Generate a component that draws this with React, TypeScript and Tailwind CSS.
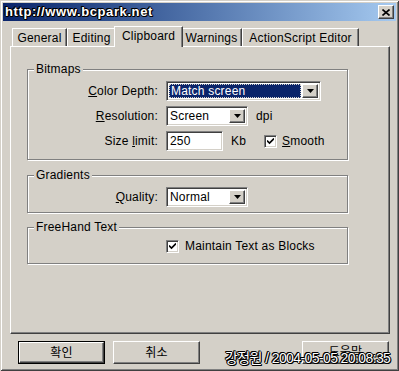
import React from 'react';

const font = "font-['Liberation_Sans','Noto_Sans_CJK_KR',sans-serif]";
const raised =
  'border border-t-white border-l-white border-b-[#404040] border-r-[#404040] shadow-[inset_-1px_-1px_0_#808080]';
const sunken =
  'border border-t-[#808080] border-l-[#808080] border-b-white border-r-white shadow-[inset_1px_1px_0_#404040,inset_-1px_-1px_0_#d4d0c8]';
const outline = '[text-shadow:1px_0_#000,-1px_0_#000,0_1px_#000,0_-1px_#000,1px_1px_#000,-1px_-1px_#000]';

const Arrow: React.FC = () => (
  <div className={`flex h-full w-[16px] shrink-0 items-center justify-center bg-[#d4d0c8] ${raised}`}>
    <svg width="7" height="4" viewBox="0 0 7 4">
      <path d="M0 0h7L3.5 4z" fill="#000" />
    </svg>
  </div>
);

const Combo: React.FC<{ value: string; width: string; focused?: boolean }> = ({ value, width, focused }) => (
  <div className={`flex h-[20px] items-stretch bg-white p-[2px] ${sunken} ${width}`}>
    <div className="flex flex-1 items-center pr-[1px]">
      {focused ? (
        <span className="flex h-full flex-1 items-center border border-dotted border-[#d4d0c8] bg-[#0a246a] pl-[1px] text-white">
          {value}
        </span>
      ) : (
        <span className="pl-[1px]">{value}</span>
      )}
    </div>
    <Arrow />
  </div>
);

const Check: React.FC = () => (
  <div className={`flex h-[13px] w-[13px] shrink-0 items-center justify-center bg-white ${sunken}`}>
    <svg width="7" height="7" viewBox="0 0 7 7">
      <path d="M0 2.5l2.5 2.5L7 0.5" stroke="#000" strokeWidth="1.6" fill="none" />
    </svg>
  </div>
);

const Label: React.FC<{ children: React.ReactNode }> = ({ children }) => (
  <span className="mr-[8px] w-[130px] shrink-0 text-right">{children}</span>
);

const Group: React.FC<{ title: string; className?: string; children: React.ReactNode }> = ({ title, className, children }) => (
  <fieldset
    className={`w-[321px] border border-[#808080] shadow-[inset_1px_1px_0_#fff,1px_1px_0_#fff] ${className ?? ''}`}
  >
    <legend className="ml-[6px] bg-[#d4d0c8] px-[2px] leading-[14px]">{title}</legend>
    {children}
  </fieldset>
);

const tabs = [
  { name: 'General', w: 'w-[55px]' },
  { name: 'Editing', w: 'w-[49px]' },
  { name: 'Clipboard', w: 'w-[69px]', active: true },
  { name: 'Warnings', w: 'w-[61px]' },
  { name: 'ActionScript Editor', w: 'w-[117px]' },
];

export default function App() {
  return (
    <div
      className={`relative h-[371px] w-[399px] bg-[#d4d0c8] p-[3px] text-[12px] tracking-[0.2px] text-black ${font} shadow-[inset_1px_1px_0_#d4d0c8,inset_-1px_-1px_0_#404040,inset_2px_2px_0_#fff,inset_-2px_-2px_0_#808080]`}
    >
      {/* title bar */}
      <div className="flex h-[18px] items-center justify-between bg-gradient-to-r from-[#0a246a] to-[#a6caf0] pl-[2px] pr-[2px]">
        <span className={`text-[13px] font-bold tracking-[0.6px] text-white ${outline}`}>http://www.bcpark.net</span>
        <div className={`flex h-[14px] w-[16px] items-center justify-center bg-[#d4d0c8] ${raised}`}>
          <svg width="8" height="7" viewBox="0 0 8 7">
            <path d="M0.5 0.5l7 6M7.5 0.5l-7 6" stroke="#000" strokeWidth="1.6" />
          </svg>
        </div>
      </div>

      <div className="px-[7px]">
        {/* tabs */}
        <div className="mt-[5px] flex h-[20px] items-end pl-[2px]">
          {tabs.map((t) =>
            t.active ? (
              <div
                key={t.name}
                className={`relative z-10 mx-[-2px] mb-[-1px] flex h-[21px] items-center justify-center border-l border-t border-r border-l-white border-t-white border-r-[#404040] bg-[#d4d0c8] pb-[3px] shadow-[inset_-1px_0_0_#808080] ${t.w}`}
              >
                {t.name}
              </div>
            ) : (
              <div
                key={t.name}
                className={`flex h-[18px] items-center justify-center border-l border-t border-r border-l-white border-t-white border-r-[#404040] shadow-[inset_-1px_0_0_#808080] ${t.w}`}
              >
                {t.name}
              </div>
            )
          )}
        </div>

        {/* panel */}
        <div className={`h-[288px] w-[380px] pl-[16px] pt-[15px] ${raised}`}>
          <Group title="Bitmaps" className="pb-[8px]">
            <div className="flex flex-col gap-[5px] pt-[5px]">
              <div className="flex h-[20px] items-center">
                <Label>
                  <u>C</u>olor Depth:
                </Label>
                <Combo value="Match screen" width="w-[155px]" focused />
              </div>
              <div className="flex h-[20px] items-center">
                <Label>
                  <u>R</u>esolution:
                </Label>
                <Combo value="Screen" width="w-[82px]" />
                <span className="ml-[8px]">dpi</span>
              </div>
              <div className="flex h-[20px] items-center">
                <Label>
                  Size <u>l</u>imit:
                </Label>
                <div className={`flex h-[20px] w-[57px] items-center bg-white pl-[3px] ${sunken}`}>250</div>
                <span className="ml-[8px]">Kb</span>
                <div className="ml-[18px] flex items-center gap-[5px]">
                  <Check />
                  <span>
                    <u>S</u>mooth
                  </span>
                </div>
              </div>
            </div>
          </Group>

          <Group title="Gradients" className="mt-[8px] pb-[5px]">
            <div className="flex h-[20px] items-center mt-[5px]">
              <Label>
                <u>Q</u>uality:
              </Label>
              <Combo value="Normal" width="w-[82px]" />
            </div>
          </Group>

          <Group title="FreeHand Text" className="mt-[7px] pb-[8px]">
            <div className="mt-[3px] flex items-center gap-[6px] pl-[138px]">
              <Check />
              <span>Maintain Text as Blocks</span>
            </div>
          </Group>
        </div>

        {/* buttons */}
        <div className="mt-[7px] flex items-center pl-[8px]">
          <div className="border border-black">
            <div className={`flex h-[21px] w-[85px] items-center justify-center ${raised}`}>확인</div>
          </div>
          <div className={`ml-[8px] flex h-[23px] w-[87px] items-center justify-center ${raised}`}>취소</div>
          <div className={`ml-auto flex h-[23px] w-[87px] items-start justify-center pt-[1px] ${raised}`}>도움말</div>
        </div>
      </div>

      <span
        className={`absolute left-[225px] top-[348px] text-[14px] tracking-[-0.6px] text-white ${outline}`}
      >
        강정원 / 2004-05-05 20:08:35
      </span>
    </div>
  );
}
